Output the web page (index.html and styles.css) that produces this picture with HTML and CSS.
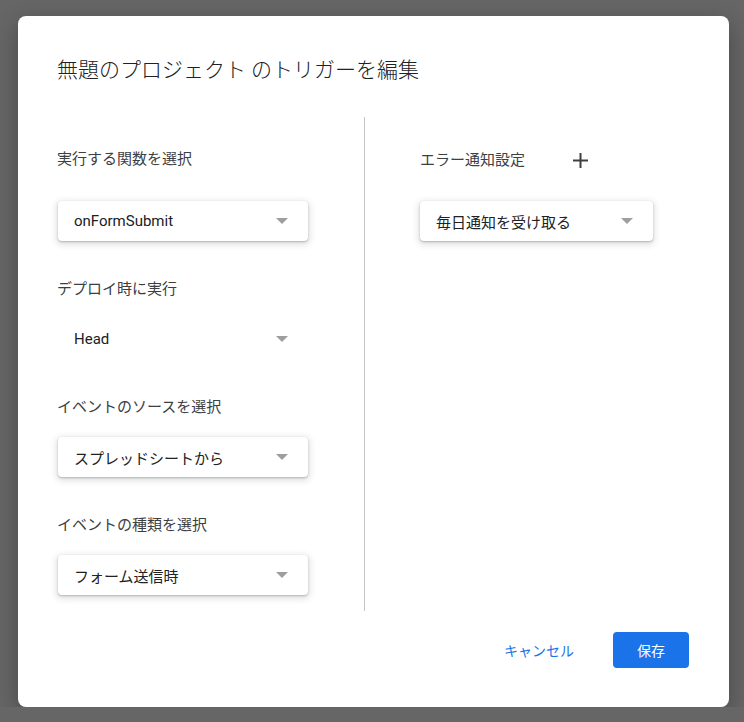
FILE: index.html
```html
<!DOCTYPE html>
<html lang="ja">
<head>
    <meta charset="UTF-8">
    <meta name="viewport" content="width=device-width, initial-scale=1.0">
    <title>トリガーを編集</title>
    <link rel="stylesheet" href="styles.css">
</head>
<body>
    <div class="dialog">
        <h1 class="title">無題のプロジェクト のトリガーを編集</h1>

        <div class="columns">
            <div class="col col-left">
                <div class="field field-first">
                    <div class="label">実行する関数を選択</div>
                    <div class="select raised"><span>onFormSubmit</span><span class="arrow"></span></div>
                </div>
                <div class="field">
                    <div class="label">デプロイ時に実行</div>
                    <div class="select"><span>Head</span><span class="arrow"></span></div>
                </div>
                <div class="field">
                    <div class="label">イベントのソースを選択</div>
                    <div class="select raised"><span>スプレッドシートから</span><span class="arrow"></span></div>
                </div>
                <div class="field">
                    <div class="label">イベントの種類を選択</div>
                    <div class="select raised"><span>フォーム送信時</span><span class="arrow"></span></div>
                </div>
            </div>

            <div class="col col-right">
                <div class="label-row">
                    <span class="label">エラー通知設定</span>
                    <svg class="plus" width="15" height="15" viewBox="0 0 15 15">
                        <path d="M7.5 0v15M0 7.5h15" stroke="#3c4043" stroke-width="2" fill="none"/>
                    </svg>
                </div>
                <div class="select raised select-wide"><span>毎日通知を受け取る</span><span class="arrow"></span></div>
            </div>
        </div>

        <div class="footer">
            <button class="btn-text">キャンセル</button>
            <button class="btn-primary">保存</button>
        </div>
    </div>
</body>
</html>
```

FILE: styles.css
```css
body {
    margin: 0;
    background: #666666;
    font-family: Roboto, "Noto Sans CJK JP", sans-serif;
    color: #202124;
}
.dialog {
    width: 711px;
    box-sizing: border-box;
    margin: 16px 0 0 18px;
    padding: 40px 40px 39px 39px;
    background: #fff;
    border-radius: 8px;
    box-shadow: 0 8px 24px rgba(0, 0, 0, 0.3);
}
.title {
    margin: 0;
    font-size: 21px;
    line-height: 28px;
    font-weight: 300;
    color: #202124;
}
.columns {
    display: flex;
    margin-top: 33px;
}
.col-left {
    width: 307px;
    padding: 32px 0 16px;
    border-right: 1px solid #c6c6c6;
}
.col-right {
    padding: 33px 0 0 55px;
}
.field {
    margin-top: 38px;
}
.field-first {
    margin-top: 0;
}
.label {
    font-size: 15px;
    line-height: 20px;
    color: #3c4043;
    margin-bottom: 20px;
}
.field-first .label {
    margin-bottom: 32px;
}
.label-row {
    display: flex;
    align-items: center;
    height: 20px;
}
.label-row .label {
    margin-bottom: 0;
}
.plus {
    margin-left: 48px;
}
.select {
    display: flex;
    align-items: center;
    justify-content: space-between;
    width: 250px;
    height: 40px;
    box-sizing: border-box;
    margin-left: 1px;
    padding: 0 20px 0 16px;
    font-size: 15px;
    color: #202124;
    border-radius: 4px;
}
.raised {
    box-shadow: 0 1px 2px rgba(60, 64, 67, 0.3), 0 2px 6px 2px rgba(60, 64, 67, 0.15);
}
.select-wide {
    width: 233px;
    margin-left: 0;
    margin-top: 31px;
}
.arrow {
    width: 0;
    height: 0;
    border-left: 6px solid transparent;
    border-right: 6px solid transparent;
    border-top: 6px solid #9e9e9e;
}
.footer {
    display: flex;
    justify-content: flex-end;
    align-items: center;
    margin-top: 21px;
}
button {
    font-family: Roboto, "Noto Sans CJK JP", sans-serif;
    font-size: 14px;
    height: 36px;
    border: none;
    border-radius: 4px;
    cursor: pointer;
}
.btn-text {
    background: none;
    color: #1a73e8;
    padding: 0 16px;
    margin-right: 23px;
}
.btn-primary {
    background: #1a73e8;
    color: #fff;
    width: 76px;
    padding: 0;
}
```
